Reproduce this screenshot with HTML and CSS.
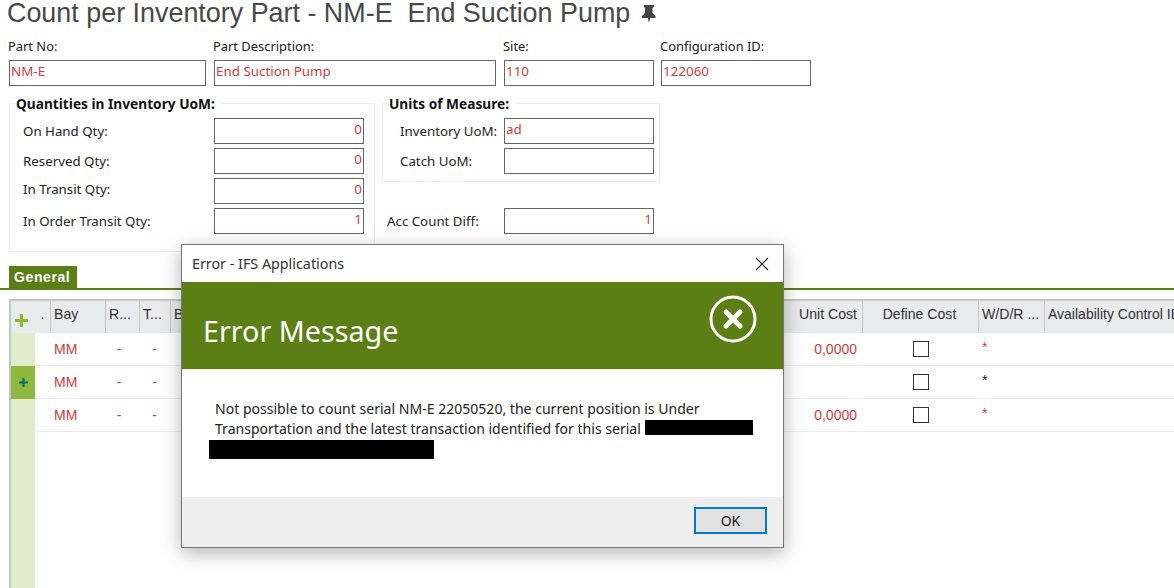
FILE: index.html
```html
<!DOCTYPE html>
<html lang="en">
<head>
<meta charset="utf-8">
<title>Count per Inventory Part</title>
<link rel="stylesheet" href="styles.css">
</head>
<body>
<div class="page">
  <h1 class="title"><span>Count per Inventory Part - NM-E&nbsp; End Suction Pump</span><svg class="pin" width="14" height="18" viewBox="0 0 14 18"><path d="M2 0h10v2l-1.500 1v5l3 3v2H8.200L7 18l-1.200-5H0v-2l3-3V3L2 2z" fill="#444"/></svg></h1>
  <div class="head-fields">
    <div class="field f-no"><label class="top-label">Part No:</label><div class="input">NM-E</div></div>
    <div class="field f-desc"><label class="top-label">Part Description:</label><div class="input">End Suction Pump</div></div>
    <div class="field f-site"><label class="top-label">Site:</label><div class="input">110</div></div>
    <div class="field f-conf"><label class="top-label">Configuration ID:</label><div class="input">122060</div></div>
  </div>
  <div class="groups">
    <fieldset class="group group-qty">
      <legend>Quantities in Inventory UoM:</legend>
      <div class="row"><label>On Hand Qty:</label><div class="input num">0</div></div>
      <div class="row"><label>Reserved Qty:</label><div class="input num">0</div></div>
      <div class="row"><label class="up">In Transit Qty:</label><div class="input num">0</div></div>
      <div class="row"><label>In Order Transit Qty:</label><div class="input num">1</div></div>
    </fieldset>
    <div class="right-col">
      <fieldset class="group group-uom">
        <legend>Units of Measure:</legend>
        <div class="row"><label>Inventory UoM:</label><div class="input">ad</div></div>
        <div class="row"><label>Catch UoM:</label><div class="input"></div></div>
      </fieldset>
      <div class="row row-diff"><label>Acc Count Diff:</label><div class="input num">1</div></div>
    </div>
  </div>
  <div class="tabs"><span class="tab">General</span></div>
  <div class="grid">
    <div class="grid-row grid-head">
      <div class="c-add"><svg width="13" height="13" viewBox="0 0 13 13"><path d="M5 0h3v5h5v3H8v5H5V8H0V5h5z" fill="#8ab92d"/></svg></div>
      <div class="hc hc-dot">.</div>
      <div class="hc">Bay</div>
      <div class="hc">R...</div>
      <div class="hc">T...</div>
      <div class="hc hc-plain">B</div>
      <div class="hc hc-cost">Unit Cost</div>
      <div class="hc hc-mid">Define Cost</div>
      <div class="hc">W/D/R ...</div>
      <div class="hc hc-last">Availability Control ID</div>
    </div>
    <div class="grid-row body-row">
      <div class="stripe"></div><div></div>
      <div class="cell red">MM</div><div class="cell red mid dash-r">-</div><div class="cell red mid">-</div><div></div>
      <div class="cell red end">0,0000</div>
      <div class="cell mid box-cell"><span class="check"></span></div>
      <div class="cell red star">*</div><div></div>
    </div>
    <div class="grid-row body-row">
      <div class="stripe current"><svg width="9" height="9" viewBox="0 0 9 9"><path d="M3.500 0h2v3.500H9v2H5.500V9h-2V5.500H0v-2h3.500z" fill="#0b6b63"/></svg></div><div></div>
      <div class="cell red">MM</div><div class="cell red mid dash-r">-</div><div class="cell red mid">-</div><div></div>
      <div class="cell end"></div>
      <div class="cell mid box-cell"><span class="check"></span></div>
      <div class="cell star">*</div><div></div>
    </div>
    <div class="grid-row body-row">
      <div class="stripe"></div><div></div>
      <div class="cell red">MM</div><div class="cell red mid dash-r">-</div><div class="cell red mid">-</div><div></div>
      <div class="cell red end">0,0000</div>
      <div class="cell mid box-cell"><span class="check"></span></div>
      <div class="cell red star">*</div><div></div>
    </div>
    <div class="filler"><div class="stripe"></div></div>
  </div>
</div>

<div class="dialog" role="dialog">
  <div class="dlg-title">
    <span>Error - IFS Applications</span>
    <svg width="14" height="14" viewBox="0 0 14 14"><path d="M1 1l12 12M13 1L1 13" stroke="#222" stroke-width="1.200" fill="none"/></svg>
  </div>
  <div class="dlg-banner">
    <span class="dlg-heading">Error Message</span>
    <svg class="dlg-icon" width="48" height="48" viewBox="0 0 48 48"><circle cx="24" cy="24" r="22" fill="none" stroke="#fff" stroke-width="3"/><path d="M17 17l14 14M31 17L17 31" stroke="#fff" stroke-width="5" stroke-linecap="round" fill="none"/></svg>
  </div>
  <div class="dlg-body">
    <p class="dlg-msg">Not possible to count serial NM-E 22050520, the current position is Under Transportation and the latest transaction identified for this serial i</p>
    <span class="redact redact-a"></span>
    <span class="redact redact-b"></span>
  </div>
  <div class="dlg-foot"><button class="ok" type="button">OK</button></div>
</div>
</body>
</html>
```
FILE: styles.css
```css
* { box-sizing: border-box; }
html, body { height: 100%; }
body {
  margin: 0;
  background: #fff;
  color: #222;
  font: 13.3px/16px "Noto Sans", "Open Sans", sans-serif;
  overflow: hidden;
}
.page {
  display: flex;
  flex-direction: column;
  height: 588px;
}
.title {
  display: flex;
  align-items: flex-start;
  gap: 12px;
  height: 38px;
  margin: 0;
  padding-left: 7px;
  font: 400 26.9px/27px "Liberation Sans", Arial, sans-serif;
  color: #484848;
  white-space: nowrap;
}
.pin { margin-top: 5px; }
.head-fields {
  display: flex;
  padding-left: 9px;
}
.f-no { width: 197px; margin-right: 8px; }
.f-desc { width: 282px; margin-right: 8px; }
.f-site { width: 150px; margin-right: 7px; }
.f-conf { width: 150px; }
.top-label {
  display: block;
  height: 22px;
  margin-left: -1px;
  font-size: 12.9px;
}
.input {
  display: flex;
  align-items: center;
  height: 26px;
  padding: 0 1px 4px;
  border: 1px solid #666;
  background: #fff;
  color: #d13b3b;
  font-size: 13.4px;
}
.input.num { justify-content: flex-end; }
.groups {
  display: flex;
  gap: 7px;
  margin: 10px 0 0 9px;
}
.group {
  margin: 0;
  padding: 8px 0 0 13px;
  border: 1px solid #ececec;
  min-width: 0;
}
.group legend {
  height: 14px;
  margin-left: -7px;
  padding: 0 6px 0 0;
  font-size: 13.7px;
  font-weight: 700;
  color: #111;
  white-space: nowrap;
}
.group-qty { width: 366px; height: 156px; }
.group-uom { width: 278px; height: 86px; padding-left: 17px; }
.group-uom legend { margin-left: -11px; }
.row {
  display: flex;
  align-items: center;
  height: 26px;
  margin-bottom: 4px;
}
.row .input { width: 150px; flex: none; }
.group-qty .row label { width: 191px; }
.group-uom .row label { width: 104px; }
.row-diff { margin: 26px 0 0 5px; }
.row-diff label { width: 117px; }
.up { margin-bottom: 4px; }
.right-col { display: flex; flex-direction: column; }
.tabs {
  height: 24px;
  margin-top: 14px;
  border-bottom: 2px solid #5b7f14;
  padding-left: 9px;
}
.tab {
  display: block;
  width: 68px;
  height: 22px;
  padding-left: 5px;
  background: #5b7f14;
  color: #fff;
  font: 700 14px/22px "Liberation Sans", Arial, sans-serif;
  letter-spacing: .6px;
}
.grid {
  flex: 1;
  display: flex;
  flex-direction: column;
  margin: 9px 0 0 9px;
  border-top: 2px solid #c4c5c7;
  border-left: 2px solid #c4c5c7;
  font: 14px/16px "Liberation Sans", Arial, sans-serif;
  color: #333;
}
.grid-row {
  display: grid;
  grid-template-columns: 24px 15px 55px 34px 31px 626px 66px 116px 66px 1fr;
  flex: none;
}
.grid-head {
  height: 32px;
  background: #e9eaec;
}
.c-add {
  display: flex;
  align-items: center;
  justify-content: center;
  padding: 6px 3px 0 0;
}
.hc {
  display: flex;
  align-items: center;
  padding: 0 0 6px 3px;
  white-space: nowrap;
  overflow: hidden;
  border-left: 1px solid #c4c5c7;
  font-size: 14.1px;
}
.hc-dot { border-left: 0; padding-left: 0; justify-content: center; }
.hc-cost { border-left: 0; justify-content: flex-end; padding: 0 5px 6px 0; }
.hc-mid { justify-content: center; padding-right: 5px; }
.hc-last { font-size: 14px; }
.body-row { height: 33px; }
.body-row > :not(.stripe) { border-bottom: 1px solid #ececec; }
.stripe {
  width: 24px;
  background: #e2ebca;
  display: flex;
  align-items: center;
  justify-content: center;
}
.stripe.current { background: #8fb93e; }
.cell {
  display: flex;
  align-items: center;
  padding-left: 4px;
  color: #222;
}
.red { color: #d13b3b; }
.mid { justify-content: center; padding-left: 0; }
.box-cell { padding-left: 2px; }
.dash-r { padding-right: 6px; }
.end { justify-content: flex-end; padding: 0 5px 0 0; }
.star { padding: 6px 0 0 4px; align-items: flex-start; }
.check {
  display: block;
  width: 16px;
  height: 16px;
  border: 1px solid #333;
}
.filler { flex: 1; }
.filler .stripe { height: 100%; }

.dialog {
  position: absolute;
  left: 181px;
  top: 244px;
  width: 603px;
  height: 304px;
  display: flex;
  flex-direction: column;
  background: #fff;
  border: 1px solid #777;
  box-shadow: 0 5px 18px rgba(0, 0, 0, .3);
}
.dlg-title {
  display: flex;
  justify-content: space-between;
  align-items: center;
  height: 37px;
  padding: 0 14px 0 10px;
  color: #333;
  font-size: 14.3px;
}
.dlg-banner {
  display: flex;
  justify-content: space-between;
  align-items: center;
  height: 88px;
  padding: 0 26px 0 21px;
  background: #5b7f14;
  border-bottom: 1px solid #e4e4e4;
  color: #fff;
}
.dlg-heading { font-size: 28.7px; line-height: 36px; padding-top: 10px; }
.dlg-icon { margin-bottom: 14px; }
.dlg-body {
  position: relative;
  flex: 1;
  padding: 29px 22px 0 33px;
}
.dlg-msg {
  margin: 0;
  font-size: 14.05px;
  line-height: 20px;
  color: #222;
}
.redact { position: absolute; background: #000; }
.redact-a { left: 463px; top: 50px; width: 108px; height: 15px; }
.redact-b { left: 27px; top: 70px; width: 225px; height: 19px; }
.dlg-foot {
  display: flex;
  justify-content: flex-end;
  align-items: flex-start;
  height: 50px;
  padding: 10px 16px 0 0;
  background: #eee;
}
.ok {
  width: 73px;
  height: 27px;
  padding: 0;
  border: 2px solid #0078d7;
  background: #e1e1e1;
  color: #111;
  font: 14px/16px "Noto Sans", sans-serif;
}
```
